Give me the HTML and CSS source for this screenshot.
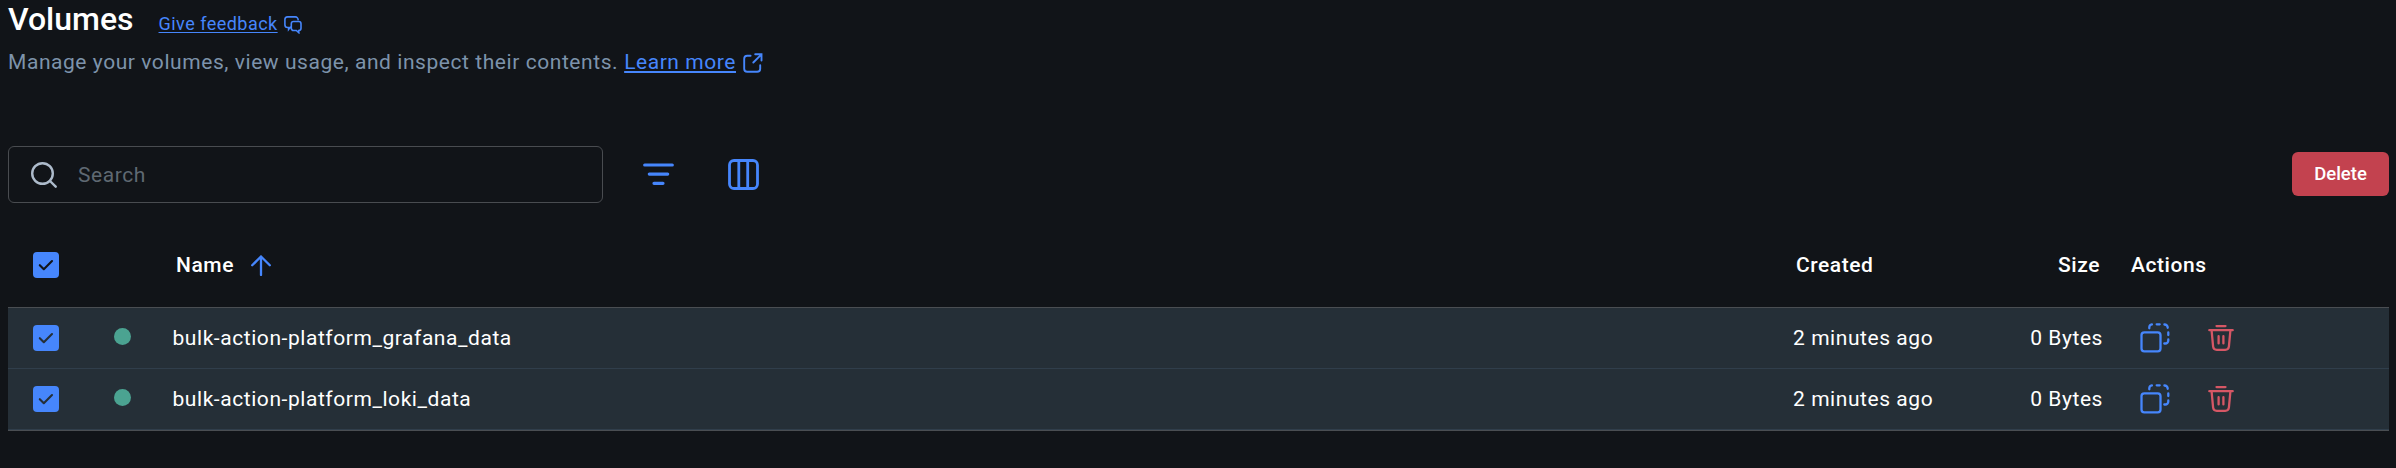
FILE: index.html
```html
<!DOCTYPE html>
<html lang="en">
<head>
<meta charset="utf-8">
<title>Volumes</title>
<link rel="stylesheet" href="styles.css">
</head>
<body>
<svg class="defs" aria-hidden="true">
  <symbol id="check" viewBox="0 0 26 26"><rect width="26" height="26" rx="4" fill="#4686fc"/><path d="M6.800 13.200l4 4 8.200-8.200" fill="none" stroke="currentColor" stroke-width="2.100" stroke-linecap="round" stroke-linejoin="round"/></symbol>
  <symbol id="clone" viewBox="0 0 30 30"><g fill="none" stroke="currentColor" stroke-width="2.300" stroke-linecap="round"><rect x="1.500" y="9.300" width="19" height="19" rx="2.800"/><path d="M9.300 5.300V4.300a3 3 0 0 1 2.600-2.900M16.700 1.300h3M24.400 1.500a3.200 3.200 0 0 1 3.300 3.300M28.300 9.500v2.500M28.300 16.500v1a3 3 0 0 1-3 3h-1"/></g></symbol>
  <symbol id="trash" viewBox="0 0 26 28"><path d="M8.500 2.100h9M1.300 6.200h23.400M3.600 6.500l1.500 16a3.700 3.700 0 0 0 3.700 3.300h8.400a3.700 3.700 0 0 0 3.700-3.300l1.500-16M10.600 12.200v7.200M15.400 12.200v7.200" fill="none" stroke="currentColor" stroke-width="2.300" stroke-linecap="round"/></symbol>
</svg>
<main class="page">
  <header class="heading">
    <h1 class="title">Volumes</h1>
    <a class="feedback">Give feedback</a>
    <svg class="feedback-icon" viewBox="0 0 18 18"><path d="M6.700 10.700L4.600 13.400V11.500H3.600A2.700 2.700 0 0 1 .9 8.800V3.600A2.700 2.700 0 0 1 3.600.9H11.400A2.700 2.700 0 0 1 14.100 3.600V4.200M9.500 5.500h5.300a2.200 2.200 0 0 1 2.200 2.200v4.600a2.200 2.200 0 0 1-2.200 2.200v2.200l-2.500-2.200H9.500a2.200 2.200 0 0 1-2.200-2.200V7.700a2.200 2.200 0 0 1 2.200-2.200z"/></svg>
  </header>
  <p class="subtitle"><span class="intro">Manage your volumes, view usage, and inspect their contents.</span><a class="learn">Learn more</a><svg class="external-icon" viewBox="0 0 20 20"><path d="M7.600 2.700H4.200a3 3 0 0 0-3 3v10a3 3 0 0 0 3 3h10a3 3 0 0 0 3-3v-3.500M12.200 1.300h6.300v6.300M18.200 1.600L10.300 9.500"/></svg></p>
  <section class="toolbar">
    <div class="search">
      <svg class="search-icon" viewBox="0 0 26 26"><circle cx="11.500" cy="11.500" r="10.300"/><path d="M19 19l5.700 5.700"/></svg>
      <span class="placeholder">Search</span>
    </div>
    <svg class="filter-icon" viewBox="0 0 31 24"><path d="M1.700 3h27.600M6.300 12.100h18.400M11 21.300h9"/></svg>
    <svg class="columns-icon" viewBox="0 0 31 31"><rect x="1.500" y="1.500" width="28" height="28" rx="4.500"/><path d="M10.800 2v27M19.700 2v27"/></svg>
    <button class="delete">Delete</button>
  </section>
  <section class="table">
    <div class="row head">
      <svg class="box"><use href="#check"/></svg>
      <span></span>
      <span class="name">Name<svg class="sort-icon" viewBox="0 0 20 21"><path d="M10 20V1.500M1.200 10.300L10 1.500l8.800 8.800"/></svg></span>
      <span class="created">Created</span>
      <span class="size">Size</span>
      <span class="actions">Actions</span>
    </div>
    <div class="body">
      <div class="row item">
        <svg class="box"><use href="#check"/></svg>
        <i class="dot"></i>
        <span class="name">bulk-action-platform_grafana_data</span>
        <span class="created">2 minutes ago</span>
        <span class="size">0 Bytes</span>
        <span class="actions"><svg class="clone"><use href="#clone"/></svg><svg class="trash"><use href="#trash"/></svg></span>
      </div>
      <div class="row item">
        <svg class="box"><use href="#check"/></svg>
        <i class="dot"></i>
        <span class="name">bulk-action-platform_loki_data</span>
        <span class="created">2 minutes ago</span>
        <span class="size">0 Bytes</span>
        <span class="actions"><svg class="clone"><use href="#clone"/></svg><svg class="trash"><use href="#trash"/></svg></span>
      </div>
    </div>
  </section>
</main>
</body>
</html>
```

FILE: styles.css
```css
* { box-sizing: border-box; }
html { height: 468px; overflow: hidden; }
body {
  margin: 0;
  height: 468px;
  overflow: hidden;
  background: #111418;
  color: #fff;
  font-family: Roboto, sans-serif;
  font-size: 21px;
  letter-spacing: 0.56px;
}
svg { display: block; flex: none; }
.defs { position: absolute; width: 0; height: 0; }
.page { padding: 0 7px 0 8px; }

.heading { display: flex; align-items: baseline; height: 40px; }
.title { margin: 0; font-size: 32px; font-weight: 500; line-height: 38px; letter-spacing: 0; }
.feedback { margin-left: 25px; color: #4686fc; font-size: 18px; line-height: 24px; letter-spacing: 0.47px; text-decoration: underline; text-decoration-thickness: 1px; text-underline-offset: 2px; }
.feedback-icon { width: 18px; height: 18px; margin-left: 6px; align-self: flex-start; margin-top: 16px; }
.feedback-icon, .external-icon, .filter-icon, .columns-icon, .sort-icon, .search-icon { fill: none; stroke: #4686fc; }
.feedback-icon { stroke-width: 1.6; }

.subtitle { display: flex; margin: 0; height: 44px; line-height: 44px; color: #7d93ab; }
.learn { margin-left: 6px; color: #4686fc; text-decoration: underline; text-decoration-thickness: 2px; text-underline-offset: 2px; }
.external-icon { width: 20px; height: 20px; margin: 13px 0 0 7px; stroke-width: 1.9; stroke-linecap: round; }

.toolbar { display: flex; align-items: center; height: 57px; margin-top: 62px; }
.search { display: flex; align-items: center; width: 595px; height: 57px; padding-left: 22px; border: 1px solid #494c50; border-radius: 6px; }
.search-icon { width: 26px; height: 26px; stroke: #adbbcb; stroke-width: 2.4; stroke-linecap: round; }
.placeholder { margin-left: 21px; color: #5f6972; }
.filter-icon { width: 31px; height: 24px; margin: 0 0 1px 40px; stroke-width: 3.2; stroke-linecap: round; }
.columns-icon { width: 31px; height: 31px; margin-left: 54px; stroke-width: 2.8; }
.delete { width: 97px; height: 44px; margin: 0 0 1px auto; padding: 0; border: 0; border-radius: 6px; background: #c3424f; color: #fff; font: 500 18.500px Roboto, sans-serif; letter-spacing: 0; }

.row { display: grid; grid-template-columns: 80px 59px 1621px 180px 155px 1fr; align-items: center; }
.box { width: 26px; height: 26px; margin-left: 25px; color: #111418; }
.head { height: 84px; margin-top: 20px; font-weight: 500; }
.sort-icon { width: 20px; height: 21px; margin-left: 17px; stroke-width: 2.3; stroke-linecap: round; stroke-linejoin: round; }
.body { border-top: 1px solid #4a4e52; border-bottom: 1px solid #4a4e52; background: #252f37; }
.item { height: 61px; border-bottom: 1px solid #303e4b; }
.item .box { color: #252f37; }
.name { padding-left: 25.5px; }
.head .name { display: flex; align-items: center; padding-left: 29px; }
.dot { width: 17px; height: 17px; margin: -4px 0 0 26px; border-radius: 50%; background: #4ba391; }
.created { padding-left: 25px; }
.head .created { padding-left: 28px; }
.size { text-align: right; }
.head .size { padding-right: 3px; }
.actions { display: flex; align-items: center; padding-left: 37px; }
.head .actions { padding-left: 28px; }
.clone { width: 30px; height: 30px; color: #4686fc; }
.trash { width: 26px; height: 28px; margin-left: 38px; color: #d65765; }
```
